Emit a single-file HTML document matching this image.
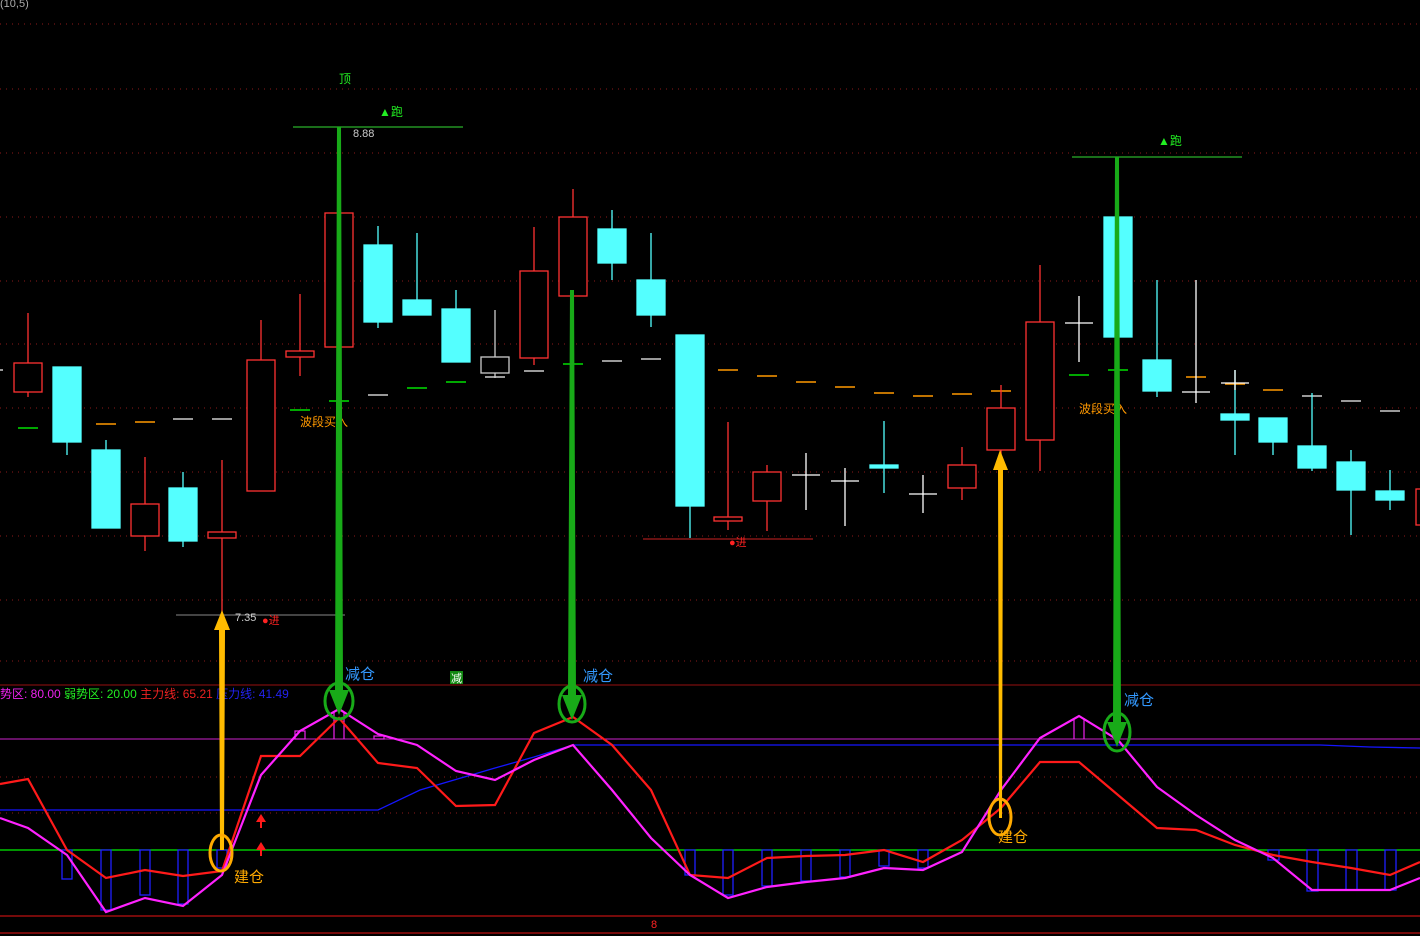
<!DOCTYPE html><html><head><meta charset="utf-8"><style>
html,body{margin:0;padding:0;background:#000;width:1420px;height:936px;overflow:hidden}
svg{display:block}
text{font-family:"Liberation Sans","Noto Sans CJK SC",sans-serif}
</style></head><body>
<svg width="1420" height="936" viewBox="0 0 1420 936" xmlns="http://www.w3.org/2000/svg">
<rect width="1420" height="936" fill="#000"/>
<g stroke="#8b1a1a" stroke-width="1" stroke-dasharray="1,5">
<line x1="0" y1="24" x2="1420" y2="24"/><line x1="0" y1="89" x2="1420" y2="89"/><line x1="0" y1="153" x2="1420" y2="153"/><line x1="0" y1="217" x2="1420" y2="217"/><line x1="0" y1="281" x2="1420" y2="281"/><line x1="0" y1="344" x2="1420" y2="344"/><line x1="0" y1="408" x2="1420" y2="408"/><line x1="0" y1="472" x2="1420" y2="472"/><line x1="0" y1="536" x2="1420" y2="536"/><line x1="0" y1="600" x2="1420" y2="600"/>
<line x1="0" y1="661" x2="1420" y2="661"/><line x1="0" y1="777" x2="1420" y2="777"/><line x1="0" y1="813" x2="1420" y2="813"/>
</g>
<text x="0" y="7" fill="#aaa" font-size="11">(10,5)</text>
<!-- MA dashes -->
<g stroke-width="1.5">
<g stroke="#00e000"><line x1="18" y1="428" x2="38" y2="428"/><line x1="251" y1="416" x2="271" y2="416"/><line x1="290" y1="410" x2="310" y2="410"/><line x1="329" y1="401" x2="349" y2="401"/><line x1="407" y1="388" x2="427" y2="388"/><line x1="446" y1="382" x2="466" y2="382"/><line x1="563" y1="364" x2="583" y2="364"/><line x1="1030" y1="383" x2="1050" y2="383"/><line x1="1069" y1="375" x2="1089" y2="375"/><line x1="1108" y1="370" x2="1128" y2="370"/></g>
<g stroke="#ff9900"><line x1="57" y1="424" x2="77" y2="424"/><line x1="96" y1="424" x2="116" y2="424"/><line x1="135" y1="422" x2="155" y2="422"/><line x1="718" y1="370" x2="738" y2="370"/><line x1="757" y1="376" x2="777" y2="376"/><line x1="796" y1="382" x2="816" y2="382"/><line x1="835" y1="387" x2="855" y2="387"/><line x1="874" y1="393" x2="894" y2="393"/><line x1="913" y1="396" x2="933" y2="396"/><line x1="952" y1="394" x2="972" y2="394"/><line x1="991" y1="391" x2="1011" y2="391"/><line x1="1147" y1="371" x2="1167" y2="371"/><line x1="1186" y1="377" x2="1206" y2="377"/><line x1="1225" y1="384" x2="1245" y2="384"/><line x1="1263" y1="390" x2="1283" y2="390"/></g>
<g stroke="#ccc"><line x1="173" y1="419" x2="193" y2="419"/><line x1="212" y1="419" x2="232" y2="419"/><line x1="368" y1="395" x2="388" y2="395"/><line x1="485" y1="377" x2="505" y2="377"/><line x1="524" y1="371" x2="544" y2="371"/><line x1="602" y1="361" x2="622" y2="361"/><line x1="641" y1="359" x2="661" y2="359"/><line x1="680" y1="365" x2="700" y2="365"/><line x1="1302" y1="396" x2="1322" y2="396"/><line x1="1341" y1="401" x2="1361" y2="401"/><line x1="1380" y1="411" x2="1400" y2="411"/><line x1="0" y1="370" x2="3" y2="370"/></g>
</g>
<!-- red hollow candles -->
<g stroke="#ff3232" stroke-width="1.3" fill="#000">
<line x1="28" y1="313" x2="28" y2="397"/><rect x="14" y="363" width="28" height="29"/>
<line x1="145" y1="457" x2="145" y2="551"/><rect x="131" y="504" width="28" height="32"/>
<line x1="222" y1="460" x2="222" y2="615"/><rect x="208" y="532" width="28" height="6"/>
<line x1="261" y1="320" x2="261" y2="491"/><rect x="247" y="360" width="28" height="131"/>
<line x1="300" y1="294" x2="300" y2="376"/><rect x="286" y="351" width="28" height="6"/>
<line x1="339" y1="127" x2="339" y2="347"/><rect x="325" y="213" width="28" height="134"/>
<line x1="534" y1="227" x2="534" y2="365"/><rect x="520" y="271" width="28" height="87"/>
<line x1="573" y1="189" x2="573" y2="296"/><rect x="559" y="217" width="28" height="79"/>
<line x1="728" y1="422" x2="728" y2="530"/><rect x="714" y="517" width="28" height="4"/>
<line x1="767" y1="465" x2="767" y2="531"/><rect x="753" y="472" width="28" height="29"/>
<line x1="962" y1="447" x2="962" y2="500"/><rect x="948" y="465" width="28" height="23"/>
<line x1="1001" y1="385" x2="1001" y2="455"/><rect x="987" y="408" width="28" height="42"/>
<line x1="1040" y1="265" x2="1040" y2="471"/><rect x="1026" y="322" width="28" height="118"/>
<rect x="1416" y="489" width="10" height="36"/>
</g>
<g stroke="#ccc" stroke-width="1.3" fill="#000"><line x1="495" y1="310" x2="495" y2="378"/><rect x="481" y="357" width="28" height="16"/></g>
<!-- cyan candles -->
<g stroke="#54ffff" stroke-width="1.3" fill="#54ffff">
<line x1="67" y1="367" x2="67" y2="455"/><rect x="53" y="367" width="28" height="75"/>
<line x1="106" y1="440" x2="106" y2="528"/><rect x="92" y="450" width="28" height="78"/>
<line x1="183" y1="472" x2="183" y2="547"/><rect x="169" y="488" width="28" height="53"/>
<line x1="378" y1="226" x2="378" y2="328"/><rect x="364" y="245" width="28" height="77"/>
<line x1="417" y1="233" x2="417" y2="315"/><rect x="403" y="300" width="28" height="15"/>
<line x1="456" y1="290" x2="456" y2="362"/><rect x="442" y="309" width="28" height="53"/>
<line x1="612" y1="210" x2="612" y2="280"/><rect x="598" y="229" width="28" height="34"/>
<line x1="651" y1="233" x2="651" y2="327"/><rect x="637" y="280" width="28" height="35"/>
<line x1="690" y1="335" x2="690" y2="538"/><rect x="676" y="335" width="28" height="171"/>
<line x1="884" y1="421" x2="884" y2="493"/><rect x="870" y="465" width="28" height="3"/>
<line x1="1118" y1="157" x2="1118" y2="337"/><rect x="1104" y="217" width="28" height="120"/>
<line x1="1157" y1="280" x2="1157" y2="397"/><rect x="1143" y="360" width="28" height="31"/>
<line x1="1235" y1="370" x2="1235" y2="455"/><rect x="1221" y="414" width="28" height="6"/>
<line x1="1273" y1="418" x2="1273" y2="455"/><rect x="1259" y="418" width="28" height="24"/>
<line x1="1312" y1="393" x2="1312" y2="471"/><rect x="1298" y="446" width="28" height="22"/>
<line x1="1351" y1="450" x2="1351" y2="535"/><rect x="1337" y="462" width="28" height="28"/>
<line x1="1390" y1="470" x2="1390" y2="510"/><rect x="1376" y="491" width="28" height="9"/>
</g>
<!-- crosses -->
<g stroke="#fff" stroke-width="1.3">
<line x1="806" y1="453" x2="806" y2="510"/><line x1="792" y1="475" x2="820" y2="475"/>
<line x1="845" y1="468" x2="845" y2="526"/><line x1="831" y1="481" x2="859" y2="481"/>
<line x1="923" y1="475" x2="923" y2="513"/><line x1="909" y1="494" x2="937" y2="494"/>
<line x1="1079" y1="296" x2="1079" y2="362"/><line x1="1065" y1="323" x2="1093" y2="323"/>
<line x1="1196" y1="280" x2="1196" y2="403"/><line x1="1182" y1="392" x2="1210" y2="392"/>
<line x1="1235" y1="370" x2="1235" y2="390"/><line x1="1221" y1="383" x2="1249" y2="383"/>
</g>
<!-- labels -->
<line x1="293" y1="127" x2="463" y2="127" stroke="#33dd33"/>
<line x1="1072" y1="157" x2="1242" y2="157" stroke="#33dd33"/>
<line x1="643" y1="539" x2="813" y2="539" stroke="#cc2222"/>
<line x1="176" y1="615" x2="345" y2="615" stroke="#888"/>
<text x="339" y="83" fill="#22ee22" font-size="12">顶</text>
<text x="379" y="116" fill="#22ee22" font-size="12">▲跑</text>
<text x="1158" y="145" fill="#22ee22" font-size="12">▲跑</text>
<text x="353" y="137" fill="#ccc" font-size="11">8.88</text>
<text x="235" y="621" fill="#ccc" font-size="11">7.35</text>
<text x="262" y="624" fill="#ff2222" font-size="11">●进</text>
<text x="729" y="546" fill="#ff2222" font-size="11">●进</text>
<text x="300" y="426" fill="#ff9900" font-size="12">波段买入</text>
<text x="1079" y="413" fill="#ff9900" font-size="12">波段买入</text>
<!-- lower pane -->
<line x1="0" y1="685" x2="1420" y2="685" stroke="#991111"/>
<line x1="0" y1="739" x2="1420" y2="739" stroke="#cc22cc"/>
<line x1="0" y1="850" x2="1420" y2="850" stroke="#00ee00" stroke-width="1.3"/>
<line x1="0" y1="916" x2="1420" y2="916" stroke="#bb1111" stroke-width="1.3"/>
<line x1="0" y1="933" x2="1420" y2="933" stroke="#bb1111" stroke-width="1.3"/>
<text x="0" y="698" font-size="12"><tspan fill="#ee22ee">势区: 80.00 </tspan><tspan fill="#22ee22">弱势区: 20.00 </tspan><tspan fill="#ee2222">主力线: 65.21 </tspan><tspan fill="#2222ee">压力线: 41.49</tspan></text>
<polyline fill="none" stroke="#1515ff" stroke-width="1.3" points="0,810 378,810 420,790 495,768 534,757 573,745 1320,745 1370,747 1420,748"/>
<g stroke="#2020ff" stroke-width="1.3" fill="#000">
<rect x="62" y="850" width="10" height="29"/><rect x="101" y="850" width="10" height="60"/><rect x="140" y="850" width="10" height="45"/><rect x="178" y="850" width="10" height="54"/><rect x="217" y="850" width="10" height="18"/>
<rect x="685" y="850" width="10" height="25"/><rect x="723" y="850" width="10" height="45"/><rect x="762" y="850" width="10" height="36"/><rect x="801" y="850" width="10" height="31"/><rect x="840" y="850" width="10" height="27"/><rect x="879" y="850" width="10" height="16"/><rect x="918" y="850" width="10" height="18"/>
<rect x="1268" y="850" width="11" height="10"/><rect x="1307" y="850" width="11" height="41"/><rect x="1346" y="850" width="11" height="40"/><rect x="1385" y="850" width="11" height="40"/>
</g>
<g stroke="#ee22ee" stroke-width="1.2" fill="none"><rect x="295" y="731" width="10" height="8"/><line x1="334" y1="712" x2="334" y2="739"/><line x1="344" y1="712" x2="344" y2="739"/><line x1="1074" y1="718" x2="1074" y2="739"/><line x1="1084" y1="718" x2="1084" y2="739"/><rect x="374" y="736" width="10" height="3"/></g>
<polyline fill="none" stroke="#ff1a1a" stroke-width="2.2" points="0,784 28,779 67,850 106,878 145,870 183,876 222,871 261,756 300,756 339,718 378,763 417,768 456,806 495,805 534,733 573,717 612,745 651,790 690,875 728,878 767,858 806,856 845,855 884,850 923,862 962,840 1001,808 1040,762 1079,762 1118,795 1157,828 1196,830 1235,845 1273,855 1312,862 1351,868 1390,875 1420,862"/>
<polyline fill="none" stroke="#ff22ff" stroke-width="2.2" points="0,818 28,828 67,855 106,912 145,898 183,906 222,875 261,775 300,731 339,709 378,734 417,745 456,771 495,780 534,760 573,745 612,790 651,838 690,875 728,898 767,887 806,882 845,878 884,868 923,870 962,852 1001,790 1040,738 1079,716 1118,740 1157,787 1196,815 1235,840 1273,858 1312,890 1351,890 1390,890 1420,878"/>
<g fill="#ff1a1a"><polygon points="261,814 256,822 266,822"/><rect x="260" y="821" width="2" height="7"/><polygon points="261,842 256,850 266,850"/><rect x="260" y="849" width="2" height="7"/></g>
<!-- arrows -->
<g fill="#ffbb00"><polygon points="222,610 214,630 219,630 220,850 224,850 225,630 230,630"/><polygon points="1000,450 993,470 998,470 999,818 1002,818 1003,470 1008,470"/></g>
<g fill="#18aa18"><polygon points="337,127 341,127 343,690 349,690 339,715 329,690 335,690"/><polygon points="570,290 574,290 576,695 582,695 572,720 562,695 568,695"/><polygon points="1115,157 1119,157 1121,722 1127,722 1117,747 1107,722 1113,722"/></g>
<g fill="none" stroke-width="3"><ellipse cx="221" cy="853" rx="11" ry="18" stroke="#ffaa00"/><ellipse cx="1000" cy="817" rx="11" ry="18" stroke="#ffaa00"/><ellipse cx="339" cy="701" rx="14" ry="18" stroke="#18aa18"/><ellipse cx="572" cy="704" rx="13" ry="18" stroke="#18aa18"/><ellipse cx="1117" cy="732" rx="13" ry="19" stroke="#18aa18"/></g>
<text x="345" y="679" fill="#3399ff" font-size="15">减仓</text>
<text x="583" y="681" fill="#3399ff" font-size="15">减仓</text>
<text x="1124" y="705" fill="#3399ff" font-size="15">减仓</text>
<text x="234" y="882" fill="#ffaa00" font-size="15">建仓</text>
<text x="998" y="842" fill="#ffaa00" font-size="15">建仓</text>
<rect x="450" y="671" width="13" height="13" fill="#118811"/><text x="451" y="682" fill="#fff" font-size="11">减</text>
<text x="651" y="928" fill="#ff2222" font-size="11">8</text>
</svg>
</body></html>
